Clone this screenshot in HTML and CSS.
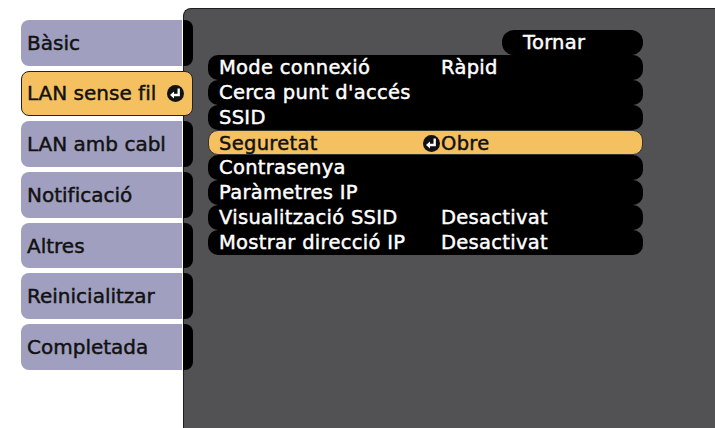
FILE: index.html
```html
<!DOCTYPE html>
<html lang="ca">
<head>
  <meta charset="UTF-8">
  <title>LAN sense fil</title>
  <link rel="stylesheet" href="styles.css">
</head>
<body>
  <div class="screen">
    <ul class="tabs">
      <li class="tab">Bàsic</li>
      <li class="tab active">LAN sense fil
        <svg class="enter" viewBox="0 0 16 16"><circle cx="8" cy="8" r="8"/><path d="M11 3.2V9.4H6.2"/><polygon points="2.8,9.4 6.6,6.2 6.6,12.6"/></svg>
      </li>
      <li class="tab">LAN amb cabl</li>
      <li class="tab">Notificació</li>
      <li class="tab">Altres</li>
      <li class="tab">Reinicialitzar</li>
      <li class="tab">Completada</li>
    </ul>

    <div class="panel">
      <div class="menu">
        <div class="back">Tornar</div>
        <div class="row"><span>Mode connexió</span><span></span><span>Ràpid</span></div>
        <div class="row"><span>Cerca punt d'accés</span></div>
        <div class="row"><span>SSID</span></div>
        <div class="row selected"><span>Seguretat</span>
          <svg class="enter" viewBox="0 0 16 16"><circle cx="8" cy="8" r="8"/><path d="M11 3.2V9.4H6.2"/><polygon points="2.8,9.4 6.6,6.2 6.6,12.6"/></svg>
          <span>Obre</span></div>
        <div class="row"><span>Contrasenya</span></div>
        <div class="row"><span>Paràmetres IP</span></div>
        <div class="row"><span>Visualització SSID</span><span></span><span>Desactivat</span></div>
        <div class="row"><span>Mostrar direcció IP</span><span></span><span>Desactivat</span></div>
      </div>
    </div>
  </div>
</body>
</html>
```

FILE: styles.css
```css
html, body {
  margin: 0;
  padding: 0;
  background-color: #FFF;
  overflow: hidden;
}

.screen {
  display: grid;
  grid-template-columns: 21px 162px 10px 1fr;
  height: 428px;
  font-family: "DejaVu Sans", Verdana, sans-serif;
  -webkit-text-stroke: 0.45px currentColor;
}

/* left column of tabs, its right end runs over the panel */
.tabs {
  grid-column: 2 / 4;
  grid-row: 1;
  z-index: 1;
  list-style: none;
  margin: 0;
  padding: 20px 0 0 0;
  display: flex;
  flex-direction: column;
  gap: 5.2px;
}

.tab {
  height: 45.5px;
  box-sizing: border-box;
  display: flex;
  align-items: center;
  padding-left: 6px;
  font-size: 20px;
  color: #111;
  border-radius: 8px;
  background: linear-gradient(to right, #A09FC0 0 161px, #FFF 161px 162px, #000 162px);
}

.tab.active {
  background: #F5C060;
  border: 1px solid #222;
  padding-left: 5px;
  gap: 11px;
}

.enter {
  width: 17px;
  height: 17px;
  flex: none;
}

.enter circle {
  fill: #111;
}

.enter path {
  fill: none;
  stroke: #FFF;
  stroke-width: 2.2;
}

.enter polygon {
  fill: #FFF;
}

.panel {
  grid-column: 3 / 5;
  grid-row: 1;
  margin-top: 8px;
  background-color: #525254;
  border-top: 1px solid #1E1E1E;
  border-left: 1px solid #1E1E1E;
  border-top-left-radius: 8px;
  padding: 21px 0 0 24px;
}

.menu {
  width: 435px;
  display: flex;
  flex-direction: column;
  letter-spacing: 0.3px;
}

.back {
  align-self: flex-end;
  width: 141px;
  height: 25px;
  box-sizing: border-box;
  padding-left: 21px;
  line-height: 25px;
  font-size: 19.5px;
  color: #FFF;
  background: #000;
  border-radius: 12px;
}

.row {
  display: grid;
  grid-template-columns: 204px 18px 1fr;
  align-items: center;
  height: 25px;
  box-sizing: border-box;
  padding-left: 11px;
  font-size: 19.5px;
  line-height: 25px;
  color: #FFF;
  background: #000;
  border-radius: 10px;
}

.row.selected {
  background: #F5C060;
  color: #111;
  border: 1px solid #333;
  padding-left: 10px;
}
```
